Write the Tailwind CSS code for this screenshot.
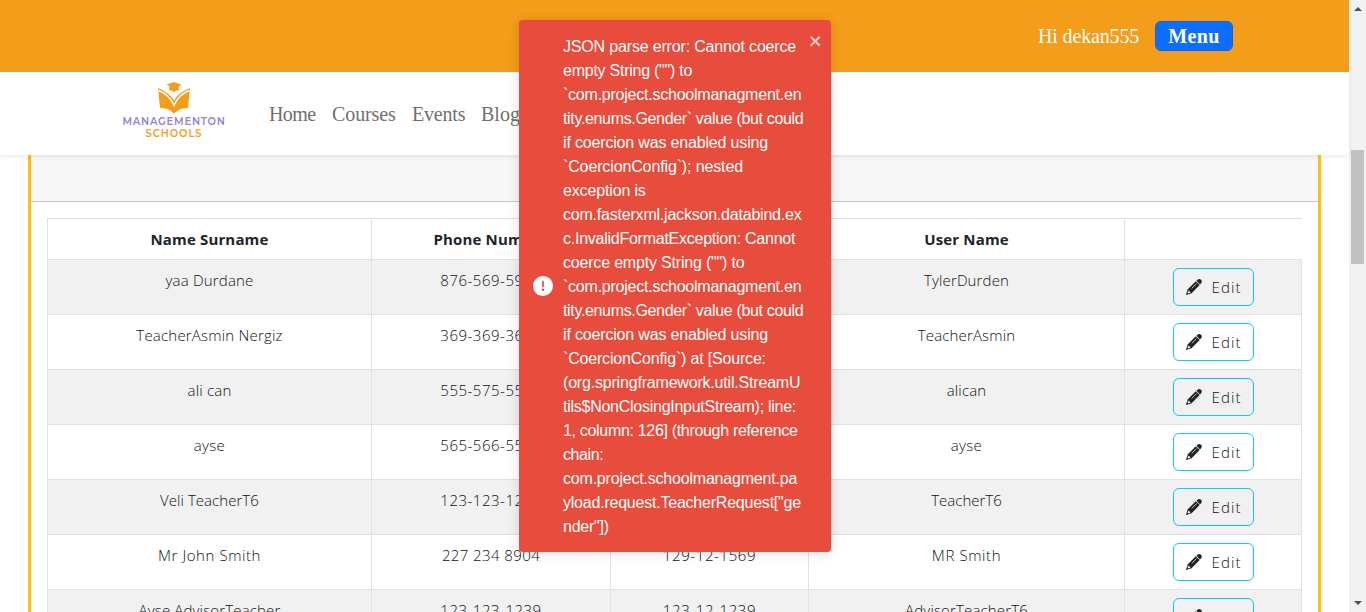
<!DOCTYPE html>
<html lang="en">
<head>
<meta charset="utf-8">
<title>Managementon Schools</title>
<script src="https://cdn.jsdelivr.net/npm/@tailwindcss/browser@4"></script>
</head>
<body class="relative flex h-[612px] w-[1366px] overflow-hidden bg-white text-[#212529]">
  <div class="flex w-[1349px] flex-col">
    <header class="flex h-[72px] shrink-0 items-start justify-end bg-[#f49d1a] pr-[116px] pt-[21px] font-['Liberation_Serif',serif] text-xl text-white">
      <span class="mr-4 w-[101px] whitespace-nowrap leading-[30px] tracking-[-0.15px]">Hi dekan555</span>
      <button class="h-[30px] w-[78px] rounded-md border border-[#0b64ea] bg-[#0d6efd] text-xl font-bold leading-[27px] tracking-[0.4px]">Menu</button>
    </header>
    <nav class="z-10 flex h-[83px] shrink-0 bg-white pl-[122px] shadow-[0_2px_4px_rgba(0,0,0,0.075)]">
      <div class="flex w-[104px] flex-col items-center pt-[9px] font-['Montserrat','Lato',sans-serif] text-[10px] font-semibold leading-[13px]">
        <svg class="mb-px h-[33px] w-[34px]" viewBox="0 0 34 33" fill="#f49d1a">
          <path d="M9.500 3.500 17 1l7.500 2.500L21.800 5v4.500c-2-.3-3.600.3-4.800 1.800-1.200-1.500-2.800-2.100-4.800-1.800V5z"/>
          <path d="M1 7C8 10 13 13 17 19.500c4-6.500 9-9.500 16-12.500L31 27c-6 0-11 2-14 6-3-4-8-6-14-6z"/>
          <path d="M1.500 9.500C9 12 14 17.500 17 24.500 20 17.500 25 12 32.500 9.500" fill="none" stroke="#fff" stroke-width="1.500"/>
        </svg>
        <span class="tracking-[0.78px] text-[#9283d5]">MANAGEMENTON</span>
        <span class="-mt-px tracking-[0.9px] text-[#f49d1a]">SCHOOLS</span>
      </div>
      <div class="ml-[43px] flex pt-[27px] font-['Liberation_Serif',serif] text-xl leading-[30px] text-[#6f6f6f]">
        <a class="w-[63px] tracking-[-0.6px]">Home</a><a class="w-20 tracking-[-0.1px]">Courses</a><a class="w-[69px] tracking-[-0.2px]">Events</a><a>Blog</a>
      </div>
    </nav>
    <main class="mx-[28px] h-[457px] w-[1293px] shrink-0 overflow-hidden border-x-[3px] border-[#ffc107] font-['Open_Sans',sans-serif]">
      <div class="h-[47px] border-b border-[#c8c8c8] bg-[#f7f7f7]"></div>
      <div class="mx-4 mt-4 w-[1255px] border-l border-t border-[#dee2e6]" id="table">
        <div class="grid h-[41px] grid-cols-[324px_239px_198px_316px_177px] border-b border-[#dee2e6] text-center text-[15px] font-bold leading-[41px] tracking-[0.15px]">
          <span class="border-r border-[#dee2e6]">Name Surname</span><span class="border-r border-[#dee2e6]">Phone Number</span><span class="border-r border-[#dee2e6]"></span><span class="border-r border-[#dee2e6]">User Name</span><span></span>
        </div>
      </div>
    </main>
  </div>
  <aside class="flex w-[17px] flex-col items-center bg-[#f1f1f1]">
    <div class="mt-[7px] h-0 w-0 border-x-4 border-b-4 border-x-transparent border-b-[#505050]"></div>
    <div class="mt-[139px] h-[114px] w-[13px] bg-[#c1c1c1]"></div>
    <div class="mt-[337px] h-0 w-0 border-x-4 border-t-4 border-x-transparent border-t-[#505050]"></div>
  </aside>

  <div class="absolute left-[519px] top-5 z-20 flex h-[532px] w-[312px] items-center rounded bg-[#e74c3c] pl-[14px] font-['Liberation_Sans',sans-serif] text-base leading-6 text-white shadow-[0_1px_10px_rgba(0,0,0,0.1),0_2px_15px_rgba(0,0,0,0.05)]">
    <svg class="h-5 w-5 shrink-0" viewBox="0 0 24 24" fill="#fff"><path d="M11.983 0a12.206 12.206 0 00-8.51 3.653A11.8 11.8 0 000 12.207 11.779 11.779 0 0011.8 24h.214A12.111 12.111 0 0024 11.791 11.766 11.766 0 0011.983 0zM10.5 16.542a1.476 1.476 0 011.449-1.53h.027a1.527 1.527 0 011.523 1.47 1.475 1.475 0 01-1.449 1.53h-.027a1.529 1.529 0 01-1.523-1.47zM11 12.5v-6a1 1 0 012 0v6a1 1 0 11-2 0z"/></svg>
    <div class="ml-[10px] whitespace-pre pt-[2px]" id="message"></div>
    <svg class="absolute right-2 top-[13px] h-4 w-[14px] opacity-70" viewBox="0 0 14 16" fill="#fff"><path fill-rule="evenodd" d="M7.71 8.23l3.75 3.75-1.48 1.48-3.75-3.75-3.75 3.75L1 11.98l3.75-3.75L1 4.48 2.48 3l3.75 3.75L9.98 3l1.48 1.48-3.75 3.75z"/></svg>
  </div>

<script>
const rows = [
  ['yaa Durdane', '876-569-5912', '', 'TylerDurden'],
  ['TeacherAsmin Nergiz', '369-369-3636', '', 'TeacherAsmin'],
  ['ali can', '555-575-5555', '', 'alican'],
  ['ayse', '565-566-5566', '', 'ayse'],
  ['Veli TeacherT6', '123-123-1236', '', 'TeacherT6'],
  ['Mr John Smith', '227 234 8904', '129-12-1569', 'MR Smith'],
  ['Ayse AdvisorTeacher', '123-123-1239', '123-12-1239', 'AdvisorTeacherT6'],
];
// Letter spacing (px) for the columns; digits are set a little wider.
const spacing = [0.2, 0.5, 0.6, 0.15];
const special = {
  'Mr John Smith': 0.58, 'MR Smith': 0.6, 'Veli TeacherT6': 0.05, 'ayse': 0.3,
  'Ayse AdvisorTeacher': 0.15, '227 234 8904': 0.4, 'TeacherT6': 0,
};
const cell = (t, i) => `<span class="border-r border-[#dee2e6] pt-2" style="letter-spacing:${special[t] ?? spacing[i]}px">${t}</span>`;
document.getElementById('table').insertAdjacentHTML('beforeend', rows.map(r => `
  <div class="grid h-[55px] grid-cols-[324px_239px_198px_316px_177px] border-b border-[#dee2e6] text-center text-[15px] font-light leading-6 text-[#101214] odd:bg-white even:bg-[#f1f1f1]">
    ${r.map(cell).join('')}
    <span class="flex justify-center border-r border-[#dee2e6] pt-2">
      <button class="flex h-[38px] w-[81px] items-center rounded-md border border-[#0dcaf0] pl-3 tracking-[1.1px]">
        <svg class="mr-[10px] h-4 w-4" viewBox="0 0 16 16" fill="#212529"><path d="M10.400 1.800 11.800.500c1-.8 2.300-.6 3.200.3.900.9 1.100 2.200.3 3.200L14 5.500z"/><path d="m9.800 2.200 3.900 3.900-8.100 8.100L.300 16 0 15.700l1.800-5.400z"/><path d="m2.600 11.600 1.900 1.900-2.100 1-.8-.8z" fill="#fff"/><path d="m5.800 9.300 4.700-4.700" stroke="#fff" stroke-width=".7"/></svg>Edit
      </button>
    </span>
  </div>`).join(''));

// Each toast line with its letter spacing in px.
const message = [
  ['JSON parse error: Cannot coerce', -0.17],
  ['empty String ("") to', -0.25],
  ['`com.project.schoolmanagment.en', -0.23],
  ['tity.enums.Gender` value (but could', -0.34],
  ['if coercion was enabled using', -0.17],
  ['`CoercionConfig`); nested', -0.13],
  ['exception is', -0.15],
  ['com.fasterxml.jackson.databind.ex', -0.21],
  ['c.InvalidFormatException: Cannot', -0.25],
  ['coerce empty String ("") to', -0.19],
  ['`com.project.schoolmanagment.en', -0.23],
  ['tity.enums.Gender` value (but could', -0.34],
  ['if coercion was enabled using', -0.17],
  ['`CoercionConfig`) at [Source:', -0.18],
  ['(org.springframework.util.StreamU', -0.19],
  ['tils$NonClosingInputStream); line:', -0.26],
  ['1, column: 126] (through reference', -0.32],
  ['chain:', -0.4],
  ['com.project.schoolmanagment.pa', -0.2],
  ['yload.request.TeacherRequest["ge', -0.22],
  ['nder"])', -0.25],
];
for (const [text, ls] of message) {
  const line = document.createElement('div');
  line.textContent = text;
  line.style.letterSpacing = ls + 'px';
  document.getElementById('message').append(line);
}
</script>
</body>
</html>
